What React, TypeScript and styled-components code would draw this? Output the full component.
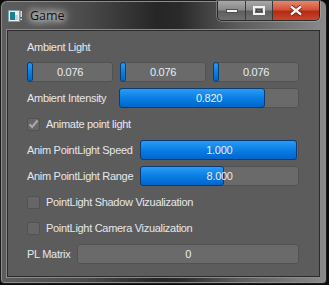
import React from "react";
import styled, { createGlobalStyle } from "styled-components";

const GlobalStyle = createGlobalStyle`
  html, body {
    margin: 0;
    padding: 0;
    background: #0c0c0c;
  }
  body {
    font-family: "Liberation Sans", Arial, sans-serif;
  }
  * {
    box-sizing: border-box;
  }
`;

type SliderProps = {
  value: number;
  max: number;
  digits?: number;
  minFill?: number;
};

const Slider = ({ value, max, digits = 3, minFill = 0 }: SliderProps) => {
  const pct = Math.min(1, value / max) * 100;
  return (
    <Frame>
      <Fill style={{ width: `max(${minFill}px, ${pct}%)` }} />
      <FrameText>{value.toFixed(digits)}</FrameText>
    </Frame>
  );
};

const Checkbox = ({ checked, label }: { checked?: boolean; label: string }) => (
  <CheckRow>
    <Box>
      {checked && (
        <svg width="11" height="10" viewBox="0 0 11 10">
          <path
            d="M1.5 5.2 L4.2 8 L9.5 1.5"
            fill="none"
            stroke="#a9a9a9"
            strokeWidth="2.1"
          />
        </svg>
      )}
    </Box>
    <span>{label}</span>
  </CheckRow>
);

const App = () => {
  return (
    <>
      <GlobalStyle />
      <Window>
        <TitleBar>
          <AppIcon>
            <svg width="14" height="12" viewBox="0 0 14 12">
              <rect x="0.5" y="0.5" width="11" height="11" fill="#e8eef2" stroke="#8a9aa4" />
              <rect x="2" y="2" width="5" height="8" fill="#1b7f8e" />
              <rect x="7" y="5" width="3" height="5" fill="#b9d7de" />
              <rect x="12.5" y="1" width="1.3" height="6" fill="#f4f4f4" />
              <rect x="12.5" y="8.5" width="1.3" height="1.6" fill="#f4f4f4" />
            </svg>
          </AppIcon>
          <Title>Game</Title>
          <Caption>
            <CapButton $w={28}>
              <svg width="12" height="4" viewBox="0 0 12 4">
                <rect x="0.5" y="0.5" width="11" height="3" fill="#f2f2f2" stroke="#3a3a3a" strokeWidth="0.8" />
              </svg>
            </CapButton>
            <CapButton $w={27}>
              <svg width="12" height="9" viewBox="0 0 12 9">
                <rect x="1" y="1" width="10" height="7" fill="none" stroke="#f2f2f2" strokeWidth="2" />
                <rect x="3.5" y="3.5" width="5" height="2" fill="none" stroke="#3a3a3a" strokeWidth="0.8" />
              </svg>
            </CapButton>
            <CloseButton>
              <svg width="14" height="11" viewBox="0 0 14 11">
                <path d="M2 1.5 L12 9.5 M12 1.5 L2 9.5" stroke="#5a1a10" strokeWidth="4" />
                <path d="M2 1.5 L12 9.5 M12 1.5 L2 9.5" stroke="#f6f0ee" strokeWidth="2.4" />
              </svg>
            </CloseButton>
          </Caption>
        </TitleBar>

        <Client>
          <Label>Ambient Light</Label>
          <Row>
            <Slider value={0.076} max={1} minFill={6} />
            <Slider value={0.076} max={1} minFill={6} />
            <Slider value={0.076} max={1} minFill={6} />
          </Row>
          <Row>
            <Label $width={85}>Ambient Intensity</Label>
            <Slider value={0.82} max={1} />
          </Row>
          <Checkbox checked label="Animate point light" />
          <Row>
            <Label>Anim PointLight Speed</Label>
            <Slider value={1} max={1} />
          </Row>
          <Row>
            <Label>Anim PointLight Range</Label>
            <Slider value={8} max={15} />
          </Row>
          <Checkbox label="PointLight Shadow Vizualization" />
          <Checkbox label="PointLight Camera Vizualization" />
          <Row>
            <Label>PL Matrix</Label>
            <Frame>
              <FrameText>0</FrameText>
            </Frame>
          </Row>
        </Client>
      </Window>
    </>
  );
};

const Window = styled.div`
  width: 327px;
  height: 284px;
  display: flex;
  flex-direction: column;
  padding: 0 6px 6px 6px;
  border: 1px solid #1c1c1c;
  border-radius: 7px 7px 4px 4px;
  box-shadow: inset 0 0 0 1px #8c8c8c;
  background: linear-gradient(
    90deg,
    #5e5e5e 0%,
    #4c4c4c 25%,
    #262626 48%,
    #2a2a2a 55%,
    #5a5a5a 72%,
    #8a8a8a 100%
  );
`;

const TitleBar = styled.div`
  height: 29px;
  display: flex;
  align-items: center;
  padding-left: 1px;
`;

const AppIcon = styled.div`
  width: 14px;
  height: 12px;
  display: flex;
  margin-top: 1px;
`;

const Title = styled.div`
  margin-left: 8px;
  font-family: "Open Sans", "Noto Sans", sans-serif;
  font-size: 12.5px;
  color: #101010;
  text-shadow: 0 0 6px #fff, 0 0 10px #fff, 0 0 14px rgba(255, 255, 255, 0.8);
`;

const Caption = styled.div`
  margin-left: auto;
  align-self: flex-start;
  display: flex;
  height: 20px;
  border: 1px solid #2a2a2a;
  border-top: none;
  border-radius: 0 0 5px 5px;
  overflow: hidden;
  box-shadow: 0 0 0 1px rgba(200, 200, 200, 0.35);
`;

const CapButton = styled.div<{ $w: number }>`
  width: ${(p) => p.$w}px;
  display: flex;
  align-items: center;
  justify-content: center;
  border-right: 1px solid #3a3a3a;
  background: linear-gradient(180deg, #a8a8a8 0%, #8a8a8a 45%, #5f5f5f 55%, #707070 100%);
`;

const CloseButton = styled.div`
  width: 46px;
  display: flex;
  align-items: center;
  justify-content: center;
  background: linear-gradient(180deg, #e6866e 0%, #d2533a 45%, #b52a14 55%, #c8462c 100%);
`;

const Client = styled.div`
  flex: 1;
  display: flex;
  flex-direction: column;
  gap: 6px;
  padding: 7px 20px 0 19px;
  background: #5c5c5c;
  border: 1px solid #2c2c2c;
  box-shadow: 0 0 0 1px #8a8a8a;
  color: #e4e8ee;
  font-size: 11px;
  letter-spacing: -0.3px;
`;

const Label = styled.div<{ $width?: number }>`
  flex: none;
  width: ${(p) => (p.$width ? `${p.$width}px` : "auto")};
  height: 18px;
  line-height: 18px;
  white-space: nowrap;
`;

const Row = styled.div`
  display: flex;
  align-items: center;
  gap: 7px;
  height: 20px;
`;

const Frame = styled.div`
  position: relative;
  flex: 1;
  height: 20px;
  background: #6a6a6a;
  border: 1px solid #525252;
  border-radius: 3px;
  display: flex;
  align-items: center;
  justify-content: center;
`;

const Fill = styled.div`
  position: absolute;
  left: -1px;
  top: -1px;
  bottom: -1px;
  border-radius: 3px;
  border: 1px solid #0a3b72;
  background: linear-gradient(180deg, #2a9cf6 0%, #0a7ee4 50%, #0066cc 100%);
`;

const FrameText = styled.span`
  position: relative;
  color: #e8eef6;
`;

const CheckRow = styled.div`
  display: flex;
  align-items: center;
  gap: 6px;
  height: 20px;
  white-space: nowrap;
`;

const Box = styled.div`
  width: 13px;
  height: 13px;
  background: #666;
  border: 1px solid #525252;
  border-radius: 2px;
  display: flex;
  align-items: center;
  justify-content: center;
`;

export default App;
